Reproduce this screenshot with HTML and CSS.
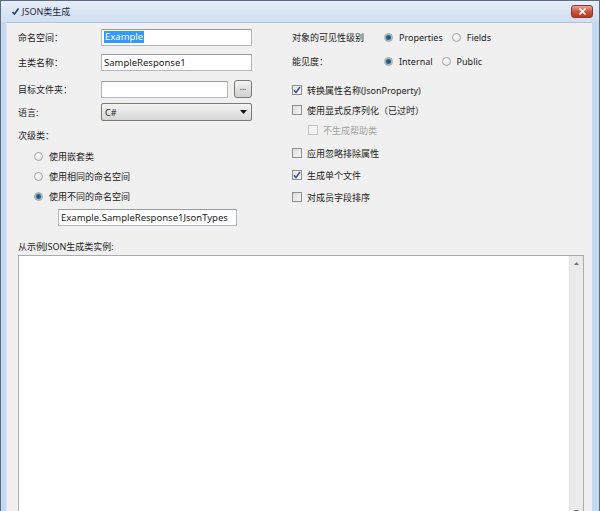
FILE: index.html
```html
<!DOCTYPE html>
<html lang="zh-CN">

<head>
    <meta charset="utf-8">
    <title>JSON类生成</title>
    <link rel="stylesheet" href="styles.css">
</head>

<body>
    <div class="window">
        <div class="titlebar">
            <svg class="title-icon" width="7" height="7" viewBox="0 0 7 7">
                <path d="M0.5 4 L2.5 6 L6.5 0.5" fill="none" stroke="#1f3f77" stroke-width="1.6"/>
            </svg>
            <span class="title">JSON类生成</span>
            <span class="close">
                <svg width="9" height="7" viewBox="0 0 9 7">
                    <path d="M1.5 0.5 L7.5 6.5 M7.5 0.5 L1.5 6.5" stroke="#fff" stroke-width="1.7"/>
                </svg>
            </span>
        </div>

        <div class="client">
            <div class="top">
                <div class="left">
                    <div class="row r1">
                        <label>命名空间：</label>
                        <div class="textbox"><span class="selected">Example</span></div>
                    </div>
                    <div class="row r2">
                        <label>主类名称：</label>
                        <div class="textbox">SampleResponse1</div>
                    </div>
                    <div class="row r3">
                        <label>目标文件夹：</label>
                        <div class="textbox short"></div>
                        <div class="browse">...</div>
                    </div>
                    <div class="row r4">
                        <label>语言:</label>
                        <div class="combo">
                            <span>C#</span>
                            <svg width="7" height="4" viewBox="0 0 7 4"><path d="M0 0 H7 L3.5 4 Z" fill="#111"/></svg>
                        </div>
                    </div>
                    <div class="row r5">
                        <label>次级类：</label>
                    </div>
                    <div class="radio-list">
                        <div class="option"><span class="radio"></span>使用嵌套类</div>
                        <div class="option"><span class="radio"></span>使用相同的命名空间</div>
                        <div class="option"><span class="radio checked"></span>使用不同的命名空间</div>
                    </div>
                    <div class="textbox sub-ns">Example.SampleResponse1JsonTypes</div>
                </div>

                <div class="right">
                    <div class="row r1">
                        <label class="wide">对象的可见性级别</label>
                        <div class="option inline"><span class="radio checked"></span>Properties</div>
                        <div class="option inline"><span class="radio"></span>Fields</div>
                    </div>
                    <div class="row r2b">
                        <label class="wide">能见度：</label>
                        <div class="option inline"><span class="radio checked"></span>Internal</div>
                        <div class="option inline"><span class="radio"></span>Public</div>
                    </div>
                    <div class="checks">
                        <div class="check c1"><span class="box checked"><svg width="8" height="8" viewBox="0 0 8 8"><path d="M1 4.2 L3 6.5 L7 1" fill="none" stroke="#3b4f8c" stroke-width="1.5"/></svg></span>转换属性名称(JsonProperty)</div>
                        <div class="check c2"><span class="box"></span>使用显式反序列化（已过时）</div>
                        <div class="check c3 disabled"><span class="box"></span>不生成帮助类</div>
                        <div class="check c4"><span class="box"></span>应用忽略排除属性</div>
                        <div class="check c5"><span class="box checked"><svg width="8" height="8" viewBox="0 0 8 8"><path d="M1 4.2 L3 6.5 L7 1" fill="none" stroke="#3b4f8c" stroke-width="1.5"/></svg></span>生成单个文件</div>
                        <div class="check c6"><span class="box"></span>对成员字段排序</div>
                    </div>
                </div>
            </div>

            <div class="sample-label">从示例JSON生成类实例:</div>
            <div class="sample">
                <div class="sample-text"></div>
                <div class="scrollbar">
                    <svg width="5" height="3" viewBox="0 0 5 3"><path d="M0 3 L2.5 0 L5 3 Z" fill="#777"/></svg>
                    <svg width="5" height="3" viewBox="0 0 5 3"><path d="M0 0 L2.5 3 L5 0 Z" fill="#777"/></svg>
                </div>
            </div>
        </div>
    </div>
</body>

</html>
```

FILE: styles.css
```css
body {
    margin: 0;
    padding: 0;
    width: 600px;
    height: 511px;
    overflow: hidden;
    font-family: "Noto Sans", "Noto Sans CJK SC", sans-serif;
    font-size: 9px;
    color: #222;
}

.window {
    width: 600px;
    height: 516px;
    box-sizing: border-box;
    display: flex;
    flex-direction: column;
    background-color: #c6d8ee;
    border-left: 1px solid #5b6b80;
    border-right: 1px solid #5b6b80;
    border-top: 1px solid #5b6b80;
    overflow: hidden;
}

.titlebar {
    height: 21px;
    display: flex;
    align-items: center;
    padding: 0 6px 0 11px;
    background: linear-gradient(#e6eef8, #cfdef1);
    flex-shrink: 0;
}

.title-icon {
    margin-right: 3px;
}

.title {
    color: #1c2a3d;
    font-size: 9px;
}

.close {
    margin-left: auto;
    width: 20px;
    height: 11px;
    display: flex;
    align-items: center;
    justify-content: center;
    border: 1px solid #8d3a2e;
    border-radius: 3px;
    background: linear-gradient(#e8a493, #c9503a 55%, #b53a24);
}

.client {
    flex: 1;
    margin: 0 7px 0 5px;
    border-left: 1px solid #dde6f1;
    border-top: 1px solid #b3c3d8;
    background-color: #f0f0f0;
    padding-left: 11px;
    display: flex;
    flex-direction: column;
}

.top {
    display: flex;
    height: 212px;
    flex-shrink: 0;
}

.left {
    width: 234px;
    display: flex;
    flex-direction: column;
}

.right {
    margin-left: 40px;
    display: flex;
    flex-direction: column;
}

.row {
    display: flex;
    align-items: center;
    height: 18px;
}

.row label {
    width: 83px;
    flex-shrink: 0;
}

.row label.wide {
    width: 92px;
}

.r1 { margin-top: 5px; }
.r2 { margin-top: 7px; }
.r2b { margin-top: 6px; }
.r3 { margin-top: 9px; }
.r4 { margin-top: 5px; }
.r5 { margin-top: 7px; height: 14px; }

.textbox {
    width: 151px;
    height: 17px;
    box-sizing: border-box;
    border: 1px solid #b4b7be;
    border-top-color: #9a9ca3;
    background-color: #fff;
    padding: 0 2px;
    display: flex;
    align-items: center;
    font-size: 9.5px;
    white-space: nowrap;
}

.textbox.short {
    width: 127px;
}

.selected {
    background-color: #3399ff;
    color: #fff;
    padding: 0 1px;
    line-height: 12px;
}

.browse {
    width: 18px;
    height: 18px;
    box-sizing: border-box;
    margin-left: 6px;
    border: 1px solid #7a7a7a;
    border-radius: 3px;
    background: linear-gradient(#f6f6f6, #e0e0e0 50%, #d2d2d2);
    text-align: center;
    line-height: 12px;
    font-size: 8px;
}

.combo {
    width: 151px;
    height: 18px;
    box-sizing: border-box;
    border: 1px solid #7a7a7a;
    border-radius: 2px;
    background: linear-gradient(#f3f3f3, #e6e6e6 50%, #d6d6d6);
    display: flex;
    align-items: center;
    justify-content: space-between;
    padding: 0 4px 0 3px;
}

.radio-list {
    margin-top: 4px;
    padding-left: 16px;
}

.option {
    display: flex;
    align-items: center;
    height: 20px;
    white-space: nowrap;
}

.option.inline {
    margin-right: 9px;
}

.radio {
    width: 9px;
    height: 9px;
    box-sizing: border-box;
    border-radius: 50%;
    border: 1px solid #a2a6ab;
    background: radial-gradient(circle at 40% 35%, #ffffff, #dcdcdc);
    margin-right: 6px;
    flex-shrink: 0;
}

.radio.checked {
    background: radial-gradient(circle, #1d4a6b 0, #2c6d8c 2px, #8fb5c8 3px, #e8eef2 4px);
}

.sub-ns {
    margin-top: 3px;
    margin-left: 40px;
    width: 179px;
}

.checks {
    margin-top: 10px;
}

.check {
    display: flex;
    align-items: center;
    height: 20px;
    white-space: nowrap;
}

.check.c4 { margin-top: 2px; height: 22px; }
.check.c5 { height: 22px; }
.check.c6 { height: 22px; }

.check.disabled {
    padding-left: 16px;
    color: #a3a3a3;
}

.box {
    width: 10px;
    height: 10px;
    box-sizing: border-box;
    border: 1px solid #8e8f8f;
    background: linear-gradient(135deg, #dcdcdc, #f7f7f7);
    margin-right: 5px;
    display: flex;
    align-items: center;
    justify-content: center;
    flex-shrink: 0;
}

.box.checked {
    background: linear-gradient(135deg, #e3e6f0, #fbfbfd);
}

.disabled .box {
    border-color: #c4c4c4;
    background: #f4f4f4;
}

.sample-label {
    margin-top: 4px;
    height: 16px;
    line-height: 16px;
    flex-shrink: 0;
}

.sample {
    width: 566px;
    flex: 1;
    box-sizing: border-box;
    border: 1px solid #acacac;
    border-bottom: none;
    background-color: #fff;
    display: flex;
}

.sample-text {
    flex: 1;
}

.scrollbar {
    width: 13px;
    background-color: #ebebeb;
    border-left: 1px solid #e2e2e2;
    display: flex;
    flex-direction: column;
    align-items: center;
    justify-content: space-between;
    padding: 6px 0 3px;
}
```
